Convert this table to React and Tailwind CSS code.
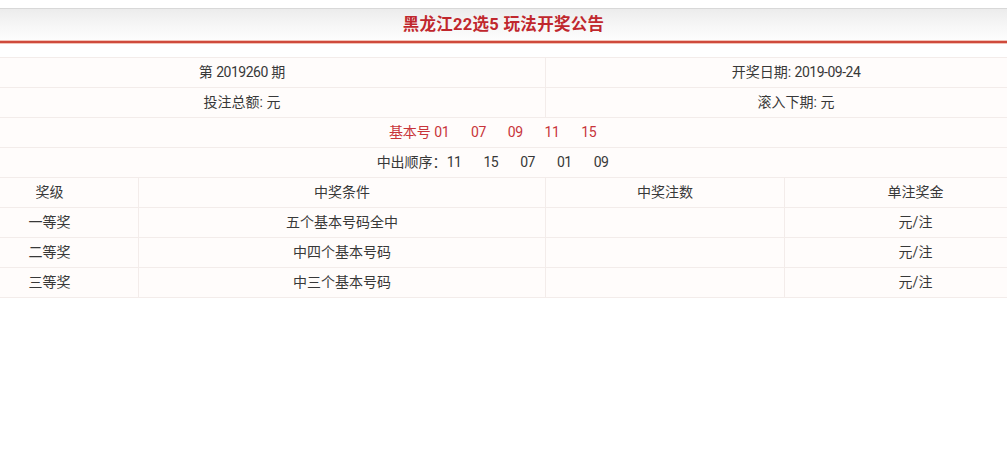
import React from 'react';

const basic = ['01', '07', '09', '11', '15'];
const order = ['11', '15', '07', '01', '09'];

const prizes = [
    { level: '一等奖', cond: '五个基本号码全中' },
    { level: '二等奖', cond: '中四个基本号码' },
    { level: '三等奖', cond: '中三个基本号码' },
];

const cell = 'h-[30px] border border-[#f3ecea] text-center align-middle p-0';

// digits in the shot are a little narrow
const N = ({ children, className = '' }) => (
    <span className={`tracking-[-0.5px] ${className}`}>{children}</span>
);

const App = () => {
    return (
        <div className="w-[1007px] h-[459px] overflow-hidden bg-white text-[14px] text-[#383838] font-['Roboto','Noto_Sans_CJK_SC',sans-serif]">
            <div className="h-[8px]" />
            <div className="h-[36px] border-t border-[#d8d8d8] bg-gradient-to-b from-[#ececec] via-[#f7f7f7] to-white flex flex-col">
                <div className="flex-1 flex items-center justify-center pt-[1px]">
                    <h1 className="text-[16.5px] font-bold text-[#c0272d] leading-none tracking-[0.3px]">黑龙江22选5 玩法开奖公告</h1>
                </div>
                <div className="h-[1px] bg-[#f2c3b8]" />
                <div className="h-[2px] bg-[#cf4a3c]" />
                <div className="h-[1px] bg-[#f2c3b8]" />
            </div>
            <div className="h-[13px]" />
            <table className="ml-[-40px] w-[1087px] max-w-none border-collapse table-fixed bg-[#fffcfb]">
                <colgroup>
                    <col className="w-[178px]" />
                    <col className="w-[407px]" />
                    <col className="w-[239px]" />
                    <col />
                </colgroup>
                <tbody>
                    <tr>
                        <td className={`${cell} pr-[22px]`} colSpan={2}>第 <N>2019260</N> 期</td>
                        <td className={cell} colSpan={2}>开奖日期: <N>2019-09-24</N></td>
                    </tr>
                    <tr>
                        <td className={`${cell} pr-[22px]`} colSpan={2}>投注总额: 元</td>
                        <td className={cell} colSpan={2}>滚入下期: 元</td>
                    </tr>
                    <tr>
                        <td className={`${cell} text-[#c8343a]`} colSpan={4}>
                            基本号 {basic.map((n, i) => (
                                <N key={i} className="mr-[22px]">{n}</N>
                            ))}
                        </td>
                    </tr>
                    <tr>
                        <td className={cell} colSpan={4}>
                            中出顺序：{order.map((n, i) => (
                                <N key={i} className="mr-[22px]">{n}</N>
                            ))}
                        </td>
                    </tr>
                    <tr>
                        <td className={cell}>奖级</td>
                        <td className={cell}>中奖条件</td>
                        <td className={cell}>中奖注数</td>
                        <td className={cell}>单注奖金</td>
                    </tr>
                    {prizes.map(p => (
                        <tr key={p.level}>
                            <td className={cell}>{p.level}</td>
                            <td className={cell}>{p.cond}</td>
                            <td className={cell}></td>
                            <td className={cell}>元/注</td>
                        </tr>
                    ))}
                </tbody>
            </table>
        </div>
    );
};

export default App;
